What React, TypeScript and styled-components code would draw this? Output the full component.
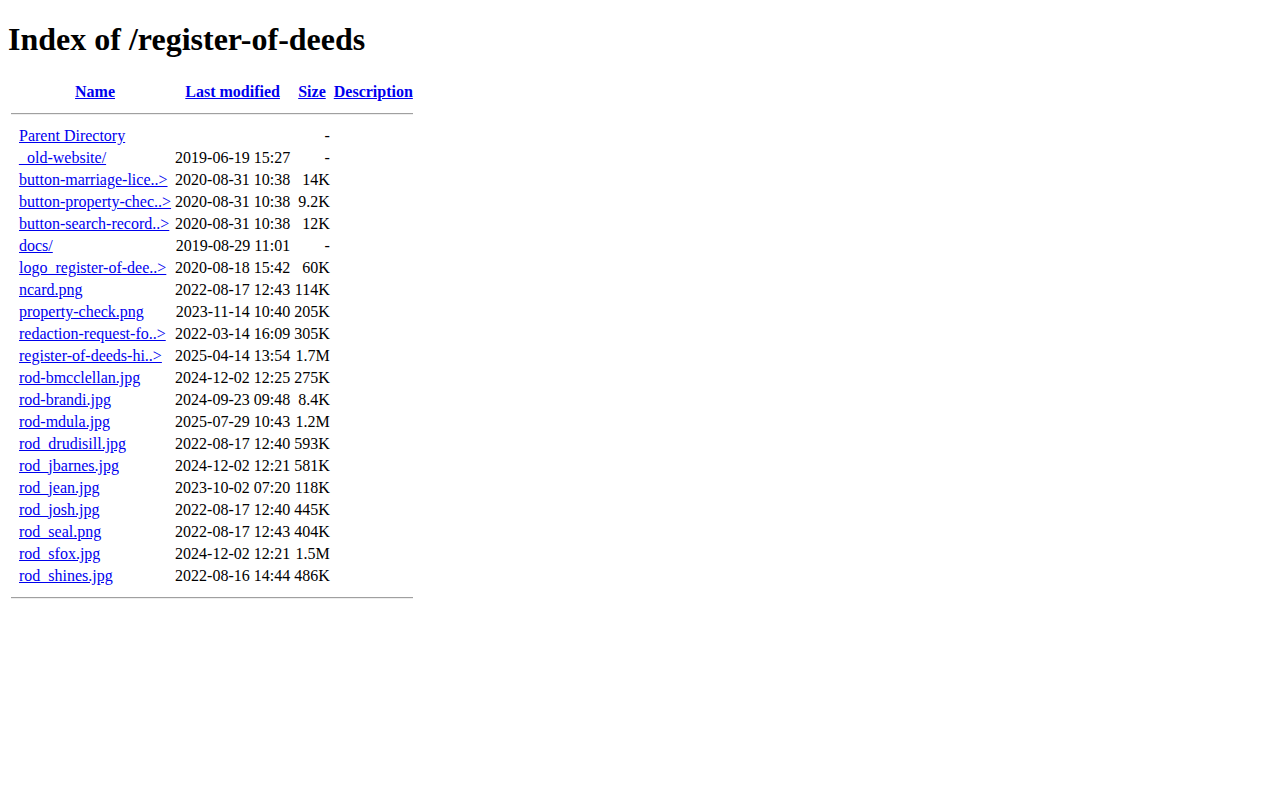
import styled, { createGlobalStyle } from 'styled-components'

const GlobalStyle = createGlobalStyle`
  body {
    margin: 8px;
    font-family: "Liberation Serif", "Times New Roman", serif;
    font-size: 16px;
    color: #000;
    background: #fff;
  }
`

// body margin and heading margin collapse in the original page
const Title = styled.h1`
  font-size: 32px;
  font-weight: bold;
  margin: 13.44px 0 21.44px;
`

const Listing = styled.table`
  border-collapse: separate;
  border-spacing: 2px;
`

const HeadCell = styled.th`
  padding: 1px;
  font-weight: bold;
  text-align: center;
  vertical-align: top;
`

const IconCell = styled.td`
  padding: 1px;
  width: 4px;
  vertical-align: top;
`

const Cell = styled.td<{ $right?: boolean }>`
  padding: 1px;
  white-space: nowrap;
  text-align: ${(p) => (p.$right ? 'right' : 'left')};
`

const Link = styled.a`
  color: #0000ee;
  text-decoration: underline;
`

const Rule = styled.hr`
  margin: 8px 0;
  border: none;
  border-top: 1px solid #a0a0a0;
  border-bottom: 1px solid #eeeeee;
  height: 0;
`

type Entry = { name: string; modified: string; size: string }

const entries: Entry[] = [
  { name: '_old-website/', modified: '2019-06-19 15:27', size: '-' },
  { name: 'button-marriage-lice..>', modified: '2020-08-31 10:38', size: '14K' },
  { name: 'button-property-chec..>', modified: '2020-08-31 10:38', size: '9.2K' },
  { name: 'button-search-record..>', modified: '2020-08-31 10:38', size: '12K' },
  { name: 'docs/', modified: '2019-08-29 11:01', size: '-' },
  { name: 'logo_register-of-dee..>', modified: '2020-08-18 15:42', size: '60K' },
  { name: 'ncard.png', modified: '2022-08-17 12:43', size: '114K' },
  { name: 'property-check.png', modified: '2023-11-14 10:40', size: '205K' },
  { name: 'redaction-request-fo..>', modified: '2022-03-14 16:09', size: '305K' },
  { name: 'register-of-deeds-hi..>', modified: '2025-04-14 13:54', size: '1.7M' },
  { name: 'rod-bmcclellan.jpg', modified: '2024-12-02 12:25', size: '275K' },
  { name: 'rod-brandi.jpg', modified: '2024-09-23 09:48', size: '8.4K' },
  { name: 'rod-mdula.jpg', modified: '2025-07-29 10:43', size: '1.2M' },
  { name: 'rod_drudisill.jpg', modified: '2022-08-17 12:40', size: '593K' },
  { name: 'rod_jbarnes.jpg', modified: '2024-12-02 12:21', size: '581K' },
  { name: 'rod_jean.jpg', modified: '2023-10-02 07:20', size: '118K' },
  { name: 'rod_josh.jpg', modified: '2022-08-17 12:40', size: '445K' },
  { name: 'rod_seal.png', modified: '2022-08-17 12:43', size: '404K' },
  { name: 'rod_sfox.jpg', modified: '2024-12-02 12:21', size: '1.5M' },
  { name: 'rod_shines.jpg', modified: '2022-08-16 14:44', size: '486K' },
]

export default function App() {
  return (
    <>
      <GlobalStyle />
      <Title>Index of /register-of-deeds</Title>
      <Listing>
        <tbody>
          <tr>
            <HeadCell />
            <HeadCell>
              <Link href="#">Name</Link>
            </HeadCell>
            <HeadCell>
              <Link href="#">Last modified</Link>
            </HeadCell>
            <HeadCell>
              <Link href="#">Size</Link>
            </HeadCell>
            <HeadCell>
              <Link href="#">Description</Link>
            </HeadCell>
          </tr>
          <tr>
            <HeadCell colSpan={5}>
              <Rule />
            </HeadCell>
          </tr>
          <tr>
            <IconCell />
            <Cell>
              <Link href="#">Parent Directory</Link>
            </Cell>
            <Cell>&nbsp;</Cell>
            <Cell $right>-</Cell>
            <Cell>&nbsp;</Cell>
          </tr>
          {entries.map((e) => (
            <tr key={e.name}>
              <IconCell />
              <Cell>
                <Link href="#">{e.name}</Link>
              </Cell>
              <Cell $right>{e.modified}</Cell>
              <Cell $right>{e.size}</Cell>
              <Cell>&nbsp;</Cell>
            </tr>
          ))}
          <tr>
            <HeadCell colSpan={5}>
              <Rule />
            </HeadCell>
          </tr>
        </tbody>
      </Listing>
    </>
  )
}
